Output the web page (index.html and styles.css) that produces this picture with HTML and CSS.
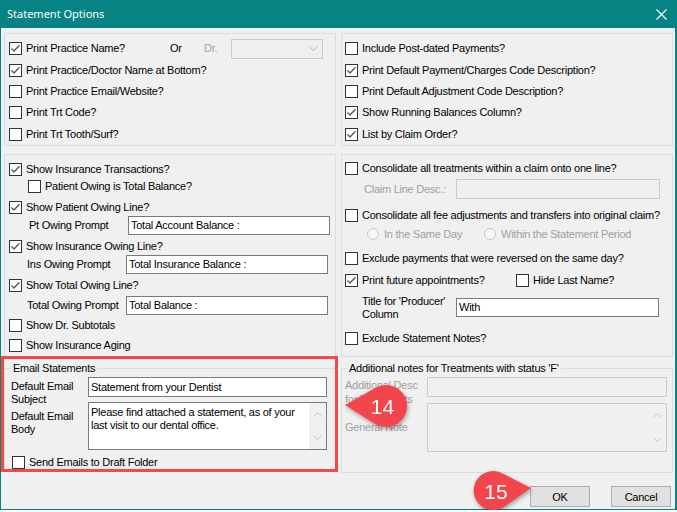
FILE: index.html
```html
<!DOCTYPE html>
<html>
<head>
<meta charset="utf-8">
<title>Statement Options</title>
<link rel="stylesheet" href="styles.css">
</head>
<body>
<div class="window">
  <div class="titlebar">
    <span class="title">Statement Options</span>
    <svg class="close" width="11" height="11" viewBox="0 0 11 11"><path d="M0.5 0.5L10.5 10.5M10.5 0.5L0.5 10.5" stroke="#fff" stroke-width="1.1" fill="none"/></svg>
  </div>
  <div class="client">
    <div class="row row1">
      <div class="group gl top">
        <div class="r h21">
          <label class="chk w161"><span class="cb on"><svg width="11" height="11" viewBox="0 0 11 11"><path d="M1.5 5.5L4 8L9.5 2.2" fill="none" stroke="#5a5a5a" stroke-width="1.4"/></svg></span>Print Practice Name?</label>
          <span class="or">Or</span>
          <span class="dr dis">Dr.</span>
          <div class="combo"><svg width="9" height="5" viewBox="0 0 9 5"><path d="M0.5 0.5L4.5 4.5L8.5 0.5" fill="none" stroke="#b4b4b4" stroke-width="1"/></svg></div>
        </div>
        <div class="r h22"><label class="chk"><span class="cb on"><svg width="11" height="11" viewBox="0 0 11 11"><path d="M1.5 5.5L4 8L9.5 2.2" fill="none" stroke="#5a5a5a" stroke-width="1.4"/></svg></span>Print Practice/Doctor Name at Bottom?</label></div>
        <div class="r h21"><label class="chk"><span class="cb"></span>Print Practice Email/Website?</label></div>
        <div class="r h21"><label class="chk"><span class="cb"></span>Print Trt Code?</label></div>
        <div class="r h22"><label class="chk"><span class="cb"></span>Print Trt Tooth/Surf?</label></div>
      </div>
      <div class="group gr top">
        <div class="r h21"><label class="chk"><span class="cb"></span>Include Post-dated Payments?</label></div>
        <div class="r h22"><label class="chk"><span class="cb on"><svg width="11" height="11" viewBox="0 0 11 11"><path d="M1.5 5.5L4 8L9.5 2.2" fill="none" stroke="#5a5a5a" stroke-width="1.4"/></svg></span>Print Default Payment/Charges Code Description?</label></div>
        <div class="r h21"><label class="chk"><span class="cb"></span>Print Default Adjustment Code Description?</label></div>
        <div class="r h21"><label class="chk"><span class="cb on"><svg width="11" height="11" viewBox="0 0 11 11"><path d="M1.5 5.5L4 8L9.5 2.2" fill="none" stroke="#5a5a5a" stroke-width="1.4"/></svg></span>Show Running Balances Column?</label></div>
        <div class="r h22"><label class="chk"><span class="cb on"><svg width="11" height="11" viewBox="0 0 11 11"><path d="M1.5 5.5L4 8L9.5 2.2" fill="none" stroke="#5a5a5a" stroke-width="1.4"/></svg></span>List by Claim Order?</label></div>
      </div>
    </div>

    <div class="row row2">
      <div class="group gl mid">
        <div class="r h18"><label class="chk"><span class="cb on"><svg width="11" height="11" viewBox="0 0 11 11"><path d="M1.5 5.5L4 8L9.5 2.2" fill="none" stroke="#5a5a5a" stroke-width="1.4"/></svg></span>Show Insurance Transactions?</label></div>
        <div class="r h17"><label class="chk sub"><span class="cb"></span>Patient Owing is Total Balance?</label></div>
        <div class="r h18 mt3"><label class="chk"><span class="cb on"><svg width="11" height="11" viewBox="0 0 11 11"><path d="M1.5 5.5L4 8L9.5 2.2" fill="none" stroke="#5a5a5a" stroke-width="1.4"/></svg></span>Show Patient Owing Line?</label></div>
        <div class="r h19"><span class="plabel p1">Pt Owing Prompt</span><div class="field w202 h19">Total Account Balance :</div></div>
        <div class="r h18 mt2"><label class="chk"><span class="cb on"><svg width="11" height="11" viewBox="0 0 11 11"><path d="M1.5 5.5L4 8L9.5 2.2" fill="none" stroke="#5a5a5a" stroke-width="1.4"/></svg></span>Show Insurance Owing Line?</label></div>
        <div class="r h19"><span class="plabel p2">Ins Owing Prompt</span><div class="field w202 h19">Total Insurance Balance :</div></div>
        <div class="r h18 mt2"><label class="chk"><span class="cb on"><svg width="11" height="11" viewBox="0 0 11 11"><path d="M1.5 5.5L4 8L9.5 2.2" fill="none" stroke="#5a5a5a" stroke-width="1.4"/></svg></span>Show Total Owing Line?</label></div>
        <div class="r h19 mt2"><span class="plabel p2">Total Owing Prompt</span><div class="field w202 h19">Total Balance :</div></div>
        <div class="r h18 mt1"><label class="chk"><span class="cb"></span>Show Dr. Subtotals</label></div>
        <div class="r h18 mt2"><label class="chk"><span class="cb"></span>Show Insurance Aging</label></div>
      </div>
      <div class="group gr mid">
        <div class="r h18"><label class="chk"><span class="cb"></span>Consolidate all treatments within a claim onto one line?</label></div>
        <div class="r h20 mt2"><span class="dis claimlbl">Claim Line Desc.:</span><div class="field dfield w204 h20"></div></div>
        <div class="r h18 mt7"><label class="chk"><span class="cb"></span>Consolidate all fee adjustments and transfers into original claim?</label></div>
        <div class="r h18 mt1 radios">
          <label class="radio w117 dis"><span class="rb"></span>In the Same Day</label>
          <label class="radio dis"><span class="rb"></span>Within the Statement Period</label>
        </div>
        <div class="r h18 mt6"><label class="chk"><span class="cb"></span>Exclude payments that were reversed on the same day?</label></div>
        <div class="r h18 mt4">
          <label class="chk w171"><span class="cb on"><svg width="11" height="11" viewBox="0 0 11 11"><path d="M1.5 5.5L4 8L9.5 2.2" fill="none" stroke="#5a5a5a" stroke-width="1.4"/></svg></span>Print future appointments?</label>
          <label class="chk"><span class="cb"></span>Hide Last Name?</label>
        </div>
        <div class="r h19 mt9"><span class="prodlbl">Title for 'Producer'<br>Column</span><div class="field w203 h19">With</div></div>
        <div class="r h18 mt12"><label class="chk"><span class="cb"></span>Exclude Statement Notes?</label></div>
      </div>
    </div>

    <div class="row row3">
      <fieldset class="fs email">
        <legend>Email Statements</legend>
        <div class="frow h20">
          <span class="flabel el1">Default Email<br>Subject</span>
          <div class="field w239 h20">Statement from your Dentist</div>
        </div>
        <div class="frow h48 mt5">
          <span class="flabel el2">Default Email<br>Body</span>
          <div class="area w239 h48">
            <div class="areatext">Please find attached a statement, as of your last visit to our dental office.</div>
            <div class="vscroll">
              <svg width="9" height="5" viewBox="0 0 9 5"><path d="M0.5 4.5L4.5 0.5L8.5 4.5" fill="none" stroke="#c4c4c4" stroke-width="1"/></svg>
              <svg width="9" height="5" viewBox="0 0 9 5"><path d="M0.5 0.5L4.5 4.5L8.5 0.5" fill="none" stroke="#c4c4c4" stroke-width="1"/></svg>
            </div>
          </div>
        </div>
        <div class="r h13 mt6"><label class="chk draft"><span class="cb"></span>Send Emails to Draft Folder</label></div>
      </fieldset>
      <fieldset class="fs notes">
        <legend>Additional notes for Treatments with status 'F'</legend>
        <div class="frow h20">
          <span class="flabel nl1 dis">Additional Desc<br>for Treatments</span>
          <div class="field dfield w240 h20"></div>
        </div>
        <div class="frow h49 mt6 center">
          <span class="flabel nl2 dis">General Note</span>
          <div class="area dfield w240 h49">
            <div class="areatext"></div>
            <div class="vscroll">
              <svg width="9" height="5" viewBox="0 0 9 5"><path d="M0.5 4.5L4.5 0.5L8.5 4.5" fill="none" stroke="#c4c4c4" stroke-width="1"/></svg>
              <svg width="9" height="5" viewBox="0 0 9 5"><path d="M0.5 0.5L4.5 4.5L8.5 0.5" fill="none" stroke="#c4c4c4" stroke-width="1"/></svg>
            </div>
          </div>
        </div>
      </fieldset>
    </div>

    <div class="buttons">
      <button class="btn">OK</button>
      <button class="btn">Cancel</button>
    </div>
  </div>

  <div class="highlight"></div>
  <svg class="annot" width="677" height="512" viewBox="0 0 677 512">
    <g class="bubble">
      <path d="M345 405L375.7 387.7A21 21 0 1 1 374.8 423.8Z" fill="#f2464c"/>
      <text x="382.5" y="413.5" text-anchor="middle">14</text>
    </g>
    <g class="bubble">
      <path d="M531 488L504.5 506.5A19.5 19.5 0 1 1 501.5 473Z" fill="#f2464c"/>
      <text x="496" y="498.5" text-anchor="middle">15</text>
    </g>
  </svg>
</div>
</body>
</html>
```

FILE: styles.css
```css
* { box-sizing: border-box; }

body {
  margin: 0;
  background: #ffffff;
  font-family: "Liberation Sans", Arial, sans-serif;
  font-size: 11px;
  line-height: 13px;
  letter-spacing: -0.25px;
  color: #000;
}

.window {
  position: relative;
  width: 677px;
  height: 510px;
  display: flex;
  flex-direction: column;
}

.titlebar {
  height: 28px;
  flex: none;
  background: #088383;
  display: flex;
  align-items: center;
  padding: 0 10px 0 7px;
}

.title {
  flex: 1;
  color: #fff;
  font-family: "Noto Sans", "Open Sans", sans-serif;
  font-size: 11px;
  letter-spacing: 0;
  line-height: 16px;
}

.close { display: block; }

.client {
  flex: 1;
  background: #f0f0f0;
  border-left: 1px solid #088383;
  border-right: 2px solid #088383;
  border-bottom: 1px solid #088383;
  padding: 5px 2px 0 3px;
  display: flex;
  flex-direction: column;
}

.row {
  display: grid;
  grid-template-columns: 332px 332px;
  column-gap: 5px;
  align-items: start;
}
.row2 { margin-top: 8px; }
.row3 { margin-top: 4px; }

.group {
  border: 1px solid #dcdcdc;
  display: flex;
  flex-direction: column;
}
.group.top { height: 113px; padding-top: 4px; }
.group.mid { height: 203px; }
.gl.mid { padding-top: 5px; }
.gr.mid { padding-top: 4px; }
.gl { padding-left: 4px; }
.gr { padding-left: 3px; }

.r { display: flex; align-items: center; flex: none; }
.h13 { height: 13px; }
.h17 { height: 17px; }
.h18 { height: 18px; }
.h19 { height: 19px; }
.h20 { height: 20px; }
.h21 { height: 21px; }
.h22 { height: 22px; }
.h48 { height: 48px; }
.h49 { height: 49px; }
.mt1 { margin-top: 1px; }
.mt2 { margin-top: 2px; }
.mt3 { margin-top: 3px; }
.mt4 { margin-top: 4px; }
.mt5 { margin-top: 5px; }
.mt6 { margin-top: 6px; }
.mt7 { margin-top: 7px; }
.mt9 { margin-top: 9px; }
.mt12 { margin-top: 12px; }

.chk, .radio {
  display: flex;
  align-items: center;
  white-space: nowrap;
  flex: none;
}
.w161 { width: 161px; }
.w171 { width: 171px; }
.w117 { width: 117px; }
.chk.sub { margin-left: 19px; }
.chk.draft { margin-left: 1px; }

.cb {
  width: 13px;
  height: 13px;
  border: 1px solid #333;
  background: #fff;
  margin-right: 4px;
  flex: none;
  display: block;
}
.cb svg { display: block; }

.rb {
  width: 12px;
  height: 12px;
  border-radius: 50%;
  border: 1px solid #c4c4c4;
  background: #f6f6f6;
  margin-right: 5px;
  flex: none;
}
.radios { padding-left: 22px; }

.dis { color: #a0a0a0; }

.or { width: 34px; flex: none; }
.dr { width: 27px; flex: none; }

.combo {
  width: 92px;
  height: 20px;
  border: 1px solid #cccccc;
  background: #efefef;
  display: flex;
  align-items: center;
  justify-content: flex-end;
  padding-right: 4px;
  flex: none;
}
.combo svg { display: block; }

.field {
  border: 1px solid #7a7a7a;
  background: #fff;
  padding: 0 2px;
  display: flex;
  align-items: center;
  white-space: nowrap;
  flex: none;
}
.dfield {
  border-color: #cccccc;
  background: #f0f0f0;
}
.w202 { width: 202px; }
.w203 { width: 203px; }
.w204 { width: 204px; }
.w239 { width: 239px; }
.w240 { width: 240px; }

.plabel { flex: none; width: 99px; white-space: nowrap; }
.plabel.p1 { margin-left: 20px; }
.plabel.p2 { margin-left: 18px; }

.claimlbl { width: 92px; margin-left: 19px; flex: none; white-space: nowrap; }
.prodlbl { width: 94px; margin-left: 17px; flex: none; white-space: nowrap; }

.fs {
  margin: 0;
  border: 1px solid #dcdcdc;
  min-width: 0;
}
.fs legend {
  padding: 0 2px;
  line-height: 14px;
  height: 14px;
}
.fs.email { height: 109px; padding: 2px 0 0 6px; }
.fs.notes { height: 112px; padding: 2px 0 0 3px; }
.fs.notes legend { margin-left: 2px; }

.frow { display: flex; align-items: flex-start; flex: none; }
.frow.center { align-items: center; }
.flabel { flex: none; white-space: nowrap; }
.el1 { width: 77px; margin-top: 3px; }
.el2 { width: 77px; margin-top: 8px; }
.nl1 { width: 82px; margin-top: 1px; line-height: 14px; }
.nl2 { width: 82px; }

.area {
  border: 1px solid #7a7a7a;
  background: #fff;
  display: flex;
  flex: none;
}
.area.dfield { border-color: #cccccc; background: #f0f0f0; }
.areatext {
  flex: 1;
  padding: 3px 2px 0 2px;
  line-height: 13px;
}
.vscroll {
  width: 17px;
  flex: none;
  background: #f0f0f0;
  display: flex;
  flex-direction: column;
  justify-content: space-between;
  align-items: center;
  padding: 9px 0 9px;
}
.vscroll svg { display: block; }

.buttons {
  margin-top: 13px;
  display: flex;
  justify-content: flex-end;
  gap: 21px;
  padding-right: 2px;
}
.btn {
  width: 60px;
  height: 21px;
  margin: 0;
  padding: 0;
  border: 1px solid #adadad;
  background: #e1e1e1;
  font-family: "Liberation Sans", Arial, sans-serif;
  font-size: 11px;
  letter-spacing: -0.25px;
  color: #000;
}

.highlight {
  position: absolute;
  left: 1px;
  top: 356px;
  width: 337px;
  height: 116px;
  border: 3px solid #f04a4a;
  pointer-events: none;
}

.annot {
  position: absolute;
  left: 0;
  top: 0;
  pointer-events: none;
}
.bubble { filter: drop-shadow(1px 2px 2px rgba(0, 0, 0, 0.35)); }
.bubble text {
  fill: #fff;
  font-family: "Liberation Sans", Arial, sans-serif;
  font-size: 21px;
  letter-spacing: 0;
}
```
